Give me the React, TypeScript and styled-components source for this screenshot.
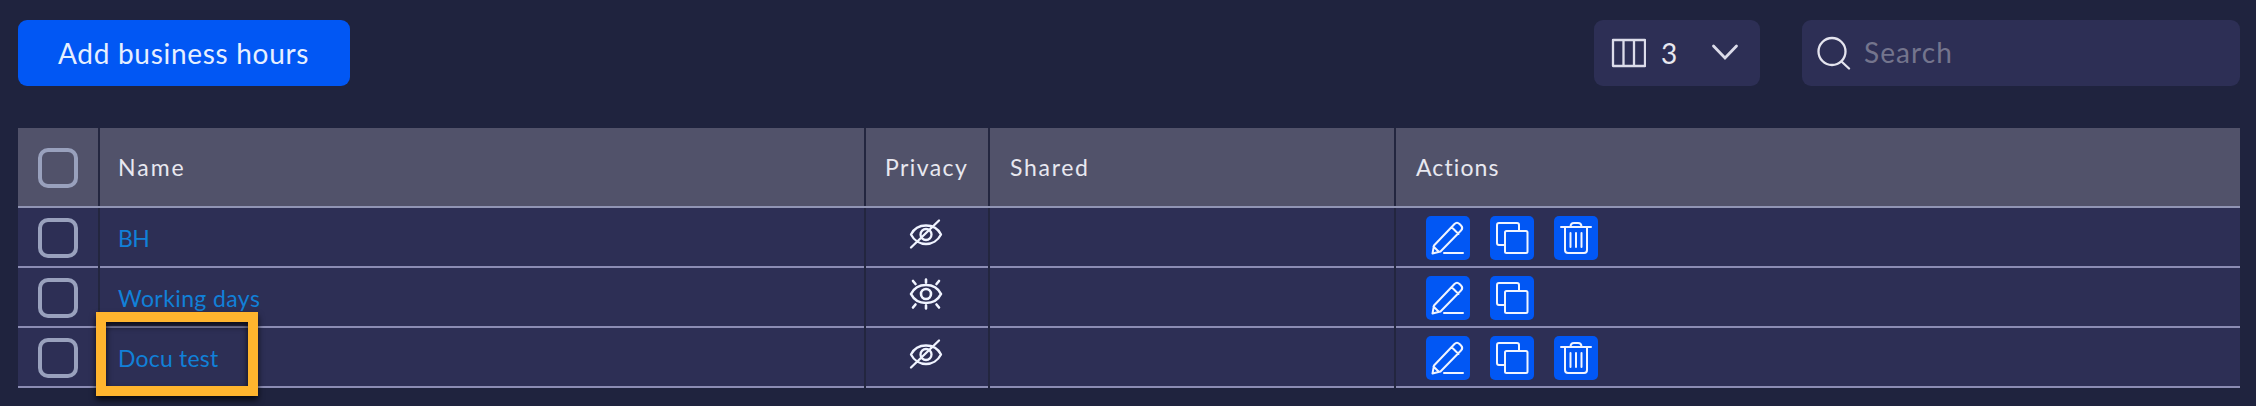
import React from "react";
import styled, { createGlobalStyle } from "styled-components";

const GlobalStyle = createGlobalStyle`
  * { box-sizing: border-box; }
  body { margin: 0; background: #1f233e; font-family: Lato, sans-serif; color: #e8e8f0; }
`;

const Page = styled.main`
  height: 406px;
  padding: 20px 16px 0 18px;
  overflow: hidden;
`;
const Toolbar = styled.div`
  display: flex;
  height: 66px;
  margin-bottom: 42px;
`;
const PrimaryButton = styled.button`
  width: 332px;
  height: 66px;
  padding: 0 0 0 40px;
  border: 0;
  border-radius: 9px;
  background: #0157f4;
  color: #e6efff;
  font: 400 28px/67px Lato, sans-serif;
  letter-spacing: 0.7px;
  text-align: left;
  white-space: nowrap;
`;
const ColumnPicker = styled.div`
  display: flex;
  align-items: center;
  width: 166px;
  margin-left: auto;
  padding-left: 17px;
  border-radius: 9px;
  background: #2d2f55;
  font-size: 28px;
  svg:last-child { margin: 0 0 2px 34px; }
`;
const Count = styled.span`
  width: 16px;
  margin-left: 15px;
  line-height: 66px;
`;
const SearchBox = styled.div`
  display: flex;
  align-items: center;
  width: 438px;
  margin-left: 42px;
  padding-left: 15px;
  border-radius: 9px;
  background: #2d2f55;
  color: #74758d;
  font-size: 28px;
  gap: 13px;
`;
const SearchLabel = styled.span`
  letter-spacing: 1.1px;
  line-height: 64px;
  padding-bottom: 2px;
`;
const Table = styled.div`
  position: relative;
`;
const Row = styled.div<{ $head?: boolean }>`
  display: grid;
  grid-template-columns: 82px 766px 124px 406px 1fr;
  height: ${(p) => (p.$head ? 80 : 60)}px;
  background: ${(p) => (p.$head ? "#51526a" : "#2d2f55")};
  border-bottom: ${(p) => (p.$head ? "2px solid #9094b4" : "0")};
`;
const Cell = styled.div<{ $head?: boolean; $center?: boolean }>`
  display: flex;
  align-items: center;
  justify-content: ${(p) => (p.$center ? "center" : "flex-start")};
  padding-left: ${(p) => (p.$center ? 0 : 20)}px;
  padding-top: ${(p) => (p.$head ? 2 : 0)}px;
  border-right: 2px solid #23263f;
  font-size: 23px;
  white-space: nowrap;
  &:last-child { border-right: 0; }
  ${(p) => (p.$head ? "" : "box-shadow: inset 0 -2px #8b8cb3;")}
`;
const Heading = styled.span<{ $spacing: number; $shift?: number }>`
  margin: 0 0 2px ${(p) => p.$shift ?? 0}px;
  letter-spacing: ${(p) => p.$spacing}px;
`;
const NameLink = styled.a<{ $spacing: number }>`
  margin-left: -2px;
  padding-bottom: 1px;
  color: #1180d8;
  letter-spacing: ${(p) => p.$spacing}px;
`;
const Checkbox = styled.span`
  width: 40px;
  height: 40px;
  border: 4px solid #99a1bd;
  border-radius: 10px;
`;
const Actions = styled.div`
  display: flex;
  gap: 20px;
  padding-left: 10px;
`;
const ActionButton = styled.button`
  display: grid;
  place-items: center;
  width: 44px;
  height: 44px;
  padding: 0;
  border: 0;
  border-radius: 5px;
  background: #0157f4;
`;
const Highlight = styled.div`
  position: absolute;
  left: 78px;
  top: 184px;
  width: 162px;
  height: 84px;
  border: 10px solid #ffb52e;
  filter: drop-shadow(0 4px 3px rgba(0, 0, 0, 0.75));
`;

const Icon = ({ size, children, width = 2 }: { size: number; width?: number; children: React.ReactNode }) => (
  <svg width={size} height={size} viewBox={`0 0 ${size} ${size}`} fill="none" stroke="#f0f4ff" strokeWidth={width} strokeLinecap="round" strokeLinejoin="round">
    {children}
  </svg>
);

const EditIcon = () => (
  <Icon size={44}>
    <path d="M6.500 37.500l1.500-8L28.500 8q2.500-2.500 5 0l1.500 1.500q2.500 2.500 0 5L14.500 35.500zM26 11.500l6.500 6.500M7.500 30.500l5.500 5.500M18 37h19" />
  </Icon>
);
const CopyIcon = () => (
  <Icon size={44}>
    <path d="M15 29H9q-2 0-2-2V9q0-2 2-2h18q2 0 2 2v6" />
    <rect x="15" y="15" width="22.500" height="22" rx="1.500" />
  </Icon>
);
const TrashIcon = () => (
  <Icon size={44}>
    <path d="M7 11h30M16.500 11q0-4 3.500-4h4q3.500 0 3.500 4M11 11v23q0 3 3 3h16q3 0 3-3V11M16.500 17v14M22 17v14M27.500 17v14" />
  </Icon>
);
const HiddenIcon = () => (
  <Icon size={36} width={2.3}>
    <path d="M3 18.500C6 12.500 12 9.500 18 9.500s12 3 15 9c-3 6-9 9.500-15 9.500s-12-3.500-15-9.500zM3 31.500L31 4.500" />
    <circle cx="18" cy="18.500" r="5.500" />
  </Icon>
);
const VisibleIcon = () => (
  <Icon size={36} width={2.6}>
    <path d="M3 18C6 12 12 9 18 9S30 12 33 18c-3 6-9 9-15 9S6 24 3 18zM18 3.500v3M18 29.500v3M5 5l2.500 3M31 5l-2.500 3M5 31.500l2.500-3M31 31.500l-2.500-3" />
    <circle cx="18" cy="18" r="5" />
  </Icon>
);
const PrivacyMark = styled.span`
  display: flex;
  margin: 0 2px 8px 0;
`;

const rows = [
  { name: "BH", spacing: -0.7, hidden: true, removable: true },
  { name: "Working days", spacing: 0.4, hidden: false, removable: false },
  { name: "Docu test", spacing: 0.2, hidden: true, removable: true },
];

export default function App() {
  return (
    <Page>
      <GlobalStyle />
      <Toolbar>
        <PrimaryButton>Add business hours</PrimaryButton>
        <ColumnPicker>
          <svg width="35" height="32" viewBox="0 0 35 32" fill="none" stroke="#dcdcea" strokeWidth="2.300" strokeLinejoin="round">
            <path d="M2 3h32v26H2zM12.500 3v26M23 3v26" />
          </svg>
          <Count>3</Count>
          <svg width="28" height="20" viewBox="0 0 28 20" fill="none" stroke="#dcdcea" strokeWidth="2.800" strokeLinecap="round">
            <path d="M2.500 4l11.500 12L25.500 4" />
          </svg>
        </ColumnPicker>
        <SearchBox>
          <svg width="34" height="34" viewBox="0 0 34 34" fill="none" stroke="#e4e4ee" strokeWidth="2.300" strokeLinecap="round">
            <circle cx="15" cy="15.500" r="13.500" />
            <path d="M24.500 25.500l7.500 7" />
          </svg>
          <SearchLabel>Search</SearchLabel>
        </SearchBox>
      </Toolbar>
      <Table>
        <Row $head>
          <Cell $head><Checkbox /></Cell>
          <Cell $head><Heading $spacing={2} $shift={-2}>Name</Heading></Cell>
          <Cell $head><Heading $spacing={1.4} $shift={-1}>Privacy</Heading></Cell>
          <Cell $head><Heading $spacing={1.7}>Shared</Heading></Cell>
          <Cell $head><Heading $spacing={1.1}>Actions</Heading></Cell>
        </Row>
        {rows.map((row) => (
          <Row key={row.name}>
            <Cell><Checkbox /></Cell>
            <Cell><NameLink $spacing={row.spacing}>{row.name}</NameLink></Cell>
            <Cell $center><PrivacyMark>{row.hidden ? <HiddenIcon /> : <VisibleIcon />}</PrivacyMark></Cell>
            <Cell />
            <Cell>
              <Actions>
                <ActionButton><EditIcon /></ActionButton>
                <ActionButton><CopyIcon /></ActionButton>
                {row.removable && <ActionButton><TrashIcon /></ActionButton>}
              </Actions>
            </Cell>
          </Row>
        ))}
        <Highlight />
      </Table>
    </Page>
  );
}
